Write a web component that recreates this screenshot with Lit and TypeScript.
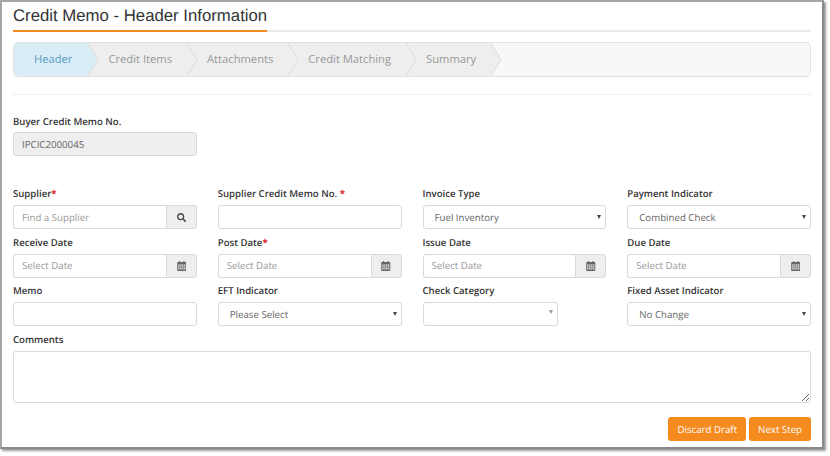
import { LitElement, html, css } from 'lit';
import { customElement } from 'lit/decorators.js';

const STEPS = ['Header', 'Credit Items', 'Attachments', 'Credit Matching', 'Summary'];

const searchIcon = html`<svg class="icon" viewBox="0 0 512 512" width="9" height="9">
  <path
    fill="#444"
    d="M505 442.7L405.3 343c-4.5-4.5-10.6-7-17-7H372c27.6-35.3 44-79.7 44-128C416 93.1 322.9 0 208 0S0 93.1 0 208s93.1 208 208 208c48.3 0 92.7-16.4 128-44v16.3c0 6.4 2.5 12.5 7 17l99.7 99.7c9.4 9.4 24.6 9.4 33.9 0l28.3-28.3c9.4-9.4 9.4-24.6.1-34zM208 336c-70.7 0-128-57.2-128-128 0-70.7 57.2-128 128-128 70.7 0 128 57.2 128 128 0 70.7-57.2 128-128 128z"
  />
</svg>`;

const calendarIcon = html`<svg class="icon" viewBox="0 0 10 11" width="9.500" height="10">
  <path fill="#666" d="M2 0h1.2v1.2H6.800V0H8v1.200h1.200q.8 0 .8.800v8.200q0 .8-.8.8H.8q-.8 0-.8-.8V2q0-.8.800-.8H2z" />
  <g fill="#ddd">
    <rect x="1" y="3.700" width="1.700" height="1.500" />
    <rect x="3.200" y="3.700" width="1.600" height="1.500" />
    <rect x="5.300" y="3.700" width="1.600" height="1.500" />
    <rect x="7.400" y="3.700" width="1.600" height="1.500" />
    <rect x="1" y="5.800" width="1.700" height="1.500" />
    <rect x="3.200" y="5.800" width="1.600" height="1.500" />
    <rect x="5.300" y="5.800" width="1.600" height="1.500" />
    <rect x="7.400" y="5.800" width="1.600" height="1.500" />
    <rect x="1" y="7.900" width="1.700" height="1.500" />
    <rect x="3.200" y="7.900" width="1.600" height="1.500" />
    <rect x="5.300" y="7.900" width="1.600" height="1.500" />
    <rect x="7.400" y="7.900" width="1.600" height="1.500" />
  </g>
</svg>`;

@customElement('app-root')
export class AppRoot extends LitElement {
  static styles = css`
    :host {
      display: block;
      width: 830px;
      height: 456px;
      background: #fff;
      font-family: 'Open Sans', sans-serif;
      font-size: 11px;
      color: #333;
      text-rendering: geometricPrecision;
    }

    .frame {
      box-sizing: border-box;
      width: 824px;
      height: 449px;
      padding: 0 11px;
      border: 2px solid #a6a6a6;
      border-right-color: #8a8a8a;
      border-bottom-color: #8a8a8a;
      box-shadow: 2px 2px 2px #999;
    }

    .title-bar {
      height: 28px;
      border-bottom: 2px solid #eaeaea;
    }

    h1 {
      display: inline-block;
      height: 28px;
      margin: 0;
      font-family: 'Liberation Sans', Arial, sans-serif;
      font-size: 16.75px;
      font-weight: 400;
      line-height: 27px;
      color: #333;
      border-bottom: 2px solid #f58a1f;
    }

    .wizard {
      display: flex;
      box-sizing: border-box;
      height: 35px;
      margin-top: 10px;
      background: #f8f8f8;
      border: 1px solid #e2e2e2;
      border-radius: 5px;
      overflow: hidden;
    }

    .step {
      position: relative;
      padding: 0 15px 0 20px;
      background: #eee;
      color: #999;
      font-size: 11.2px;
      line-height: 33px;
    }

    .step:first-child {
      padding: 0 16px 0 20px;
    }

    .step.active {
      background: #d9edf7;
      color: #5a9cc5;
    }

    .step svg {
      position: absolute;
      top: 0;
      left: 100%;
      z-index: 1;
    }

    .divider {
      height: 1px;
      margin-top: 17px;
      background: #f0f0f0;
    }

    .buyer {
      width: 184px;
      margin-top: 21px;
    }

    .buyer label {
      margin-bottom: 4px;
    }

    label {
      display: block;
      height: 12px;
      margin-bottom: 5px;
      font-size: 9.6px;
      font-weight: 600;
      line-height: 12px;
      white-space: nowrap;
    }

    label b {
      color: #e0141c;
      font-weight: 700;
    }

    .grid {
      display: grid;
      grid-template-columns: repeat(4, 1fr);
      column-gap: 21px;
      row-gap: 7.500px;
      margin-top: 32px;
    }

    .wide {
      margin-top: 8px;
    }

    input,
    select,
    textarea {
      display: block;
      box-sizing: border-box;
      width: 100%;
      height: 24px;
      margin: 0;
      padding: 0 8px;
      font: 400 9.7px 'Open Sans', sans-serif;
      color: #666;
      background: #fff;
      border: 1px solid #d9d9d9;
      border-radius: 3px;
      outline: none;
      text-rendering: geometricPrecision;
    }

    input::placeholder {
      color: #999;
      opacity: 1;
    }

    input[disabled] {
      background: #eee;
      color: #666;
    }

    textarea {
      height: 52px;
      padding: 4px 8px;
    }

    .group {
      display: flex;
      height: 24px;
    }

    .group input {
      flex: 1;
      min-width: 0;
      border-radius: 3px 0 0 3px;
      border-right: 0;
    }

    .addon {
      display: flex;
      flex: none;
      align-items: center;
      justify-content: center;
      box-sizing: border-box;
      width: 31px;
      background: #eee;
      border: 1px solid #d9d9d9;
      border-radius: 0 3px 3px 0;
    }

    .icon {
      display: block;
    }

    .select {
      position: relative;
    }

    .select.short {
      width: 135px;
    }

    .select select {
      appearance: none;
      padding-left: 11px;
    }

    .select::after {
      content: '';
      position: absolute;
      top: 10px;
      right: 5px;
      border-left: 2.500px solid transparent;
      border-right: 2.500px solid transparent;
      border-top: 4px solid #444;
      pointer-events: none;
    }

    .select.short::after {
      border-top-color: #999;
      top: 8px;
    }

    .actions {
      display: flex;
      justify-content: flex-end;
      gap: 3px;
      margin-top: 14px;
    }

    button {
      box-sizing: border-box;
      height: 24px;
      padding: 0 9px;
      font: 400 9.7px 'Open Sans', sans-serif;
      color: #fff;
      background: #f58a1f;
      border: 0;
      border-radius: 3px;
      text-rendering: geometricPrecision;
    }
  `;

  private renderText(label: unknown, placeholder = '') {
    return html`<div>
      <label>${label}</label>
      <input type="text" placeholder=${placeholder} />
    </div>`;
  }

  private renderGroup(label: unknown, placeholder: string, icon: unknown) {
    return html`<div>
      <label>${label}</label>
      <div class="group">
        <input type="text" placeholder=${placeholder} />
        <span class="addon">${icon}</span>
      </div>
    </div>`;
  }

  private renderSelect(label: string, value: string, short = false) {
    return html`<div>
      <label>${label}</label>
      <div class="select ${short ? 'short' : ''}">
        <select><option>${value}</option></select>
      </div>
    </div>`;
  }

  render() {
    const req = html`<b>*</b>`;
    return html`
      <div class="frame">
        <div class="title-bar"><h1>Credit Memo - Header Information</h1></div>

        <nav class="wizard">
          ${STEPS.map(
            (s, i) => html`<div class="step ${i === 0 ? 'active' : ''}">
              ${s}
              <svg width="11" height="33" viewBox="0 0 11 33">
                <path d="M0 0L10 16.500L0 33Z" fill=${i === 0 ? '#d9edf7' : '#eee'} />
                <path d="M0 0L10 16.500L0 33" fill="none" stroke="#dcdcdc" />
              </svg>
            </div>`
          )}
        </nav>

        <div class="divider"></div>

        <div class="buyer">
          <label>Buyer Credit Memo No.</label>
          <input type="text" disabled value="IPCIC2000045" />
        </div>

        <div class="grid">
          ${this.renderGroup(html`Supplier${req}`, 'Find a Supplier', searchIcon)}
          ${this.renderText(html`Supplier Credit Memo No. ${req}`)}
          ${this.renderSelect('Invoice Type', 'Fuel Inventory')}
          ${this.renderSelect('Payment Indicator', 'Combined Check')}
          ${this.renderGroup('Receive Date', 'Select Date', calendarIcon)}
          ${this.renderGroup(html`Post Date${req}`, 'Select Date', calendarIcon)}
          ${this.renderGroup('Issue Date', 'Select Date', calendarIcon)}
          ${this.renderGroup('Due Date', 'Select Date', calendarIcon)}
          ${this.renderText('Memo')}
          ${this.renderSelect('EFT Indicator', 'Please Select')}
          ${this.renderSelect('Check Category', '', true)}
          ${this.renderSelect('Fixed Asset Indicator', 'No Change')}
        </div>

        <div class="wide">
          <label>Comments</label>
          <textarea></textarea>
        </div>

        <div class="actions">
          <button>Discard Draft</button>
          <button>Next Step</button>
        </div>
      </div>
    `;
  }
}
